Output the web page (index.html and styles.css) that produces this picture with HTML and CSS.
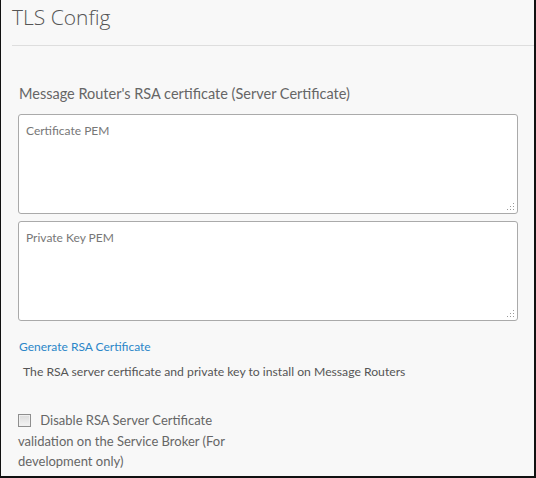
FILE: index.html
```html
<!DOCTYPE html>
<html>
<head>
<meta charset="utf-8">
<link rel="stylesheet" href="styles.css">
</head>
<body>
<div class="panel">
  <div class="header"><h1 class="title">TLS Config</h1></div>
  <div class="body">
    <div class="section-label">Message Router's RSA certificate (Server Certificate)</div>
    <div class="pem-wrap">
      <textarea class="pem" placeholder="Certificate PEM"></textarea>
      <svg class="grip" width="8" height="8" viewBox="0 0 8 8"><g fill="#9a9a9a"><rect x="6" y="0" width="1" height="1"/><rect x="3" y="3" width="1" height="1"/><rect x="6" y="3" width="1" height="1"/><rect x="0" y="6" width="1" height="1"/><rect x="3" y="6" width="1" height="1"/><rect x="6" y="6" width="1" height="1"/></g></svg>
    </div>
    <div class="pem-wrap second">
      <textarea class="pem" placeholder="Private Key PEM"></textarea>
      <svg class="grip" width="8" height="8" viewBox="0 0 8 8"><g fill="#9a9a9a"><rect x="6" y="0" width="1" height="1"/><rect x="3" y="3" width="1" height="1"/><rect x="6" y="3" width="1" height="1"/><rect x="0" y="6" width="1" height="1"/><rect x="3" y="6" width="1" height="1"/><rect x="6" y="6" width="1" height="1"/></g></svg>
    </div>
    <a class="gen-link" href="#">Generate RSA Certificate</a>
    <div class="desc">The RSA server certificate and private key to install on Message Routers</div>
    <label class="check">
      <input type="checkbox" class="cb"> Disable RSA Server Certificate validation on the Service Broker (For development only)
    </label>
  </div>
</div>
</body>
</html>
```
FILE: styles.css
```css
html, body { margin: 0; padding: 0; }
body { width: 536px; height: 478px; overflow: hidden; font-family: Lato, "Open Sans", sans-serif; }
.panel {
  box-sizing: border-box;
  width: 536px; height: 478px;
  background: #f8f8f8;
  border-left: 1px solid #111;
  border-right: 2px solid #111;
  border-bottom: 2px solid #111;
  padding-left: 11px;
}
.header {
  height: 46px;
  border-bottom: 1px solid #dedede;
  box-sizing: border-box;
}
.title {
  margin: 0; padding-top: 2px;
  font-family: "Open Sans", sans-serif;
  font-weight: 300; font-size: 21px; line-height: 30px;
  color: #555;
}
.body { padding: 37px 16px 0 6px; display: flex; flex-direction: column; align-items: flex-start; }
.section-label { font-size: 14.5px; color: #666; line-height: 22px; margin-left: 1px; }
.pem-wrap { position: relative; margin-top: 9px; height: 100px; }
.pem-wrap.second { margin-top: 7px; }
.pem {
  display: block;
  box-sizing: border-box;
  width: 500px; height: 100px;
  margin: 0;
  border: 1px solid #aaa; border-radius: 3px;
  background: #fff;
  padding: 8px 7px;
  font-family: Lato, sans-serif; font-size: 12px;
  resize: none;
}
.pem::placeholder { color: #777; }
.grip { position: absolute; right: 3px; bottom: 3px; }
.gen-link { margin-top: 17px; margin-left: 1px; font-size: 12px; color: #2b86c8; text-decoration: none; line-height: 18px; }
.desc { margin-top: 7px; margin-left: 5px; font-size: 12.2px; color: #555; line-height: 18px; }
.check {
  margin-top: 29px; width: 215px;
  font-size: 13px; line-height: 20.5px; color: #666;
}
.cb {
  -webkit-appearance: none; appearance: none;
  box-sizing: border-box;
  margin: 0 6px 0 0; width: 13px; height: 13px; vertical-align: -2px;
  border: 1px solid #8f8f8f;
  background: linear-gradient(#dcdcdc, #f4f4f4);
  box-shadow: inset 0 0 0 1px #f0f0f0;
}
```
